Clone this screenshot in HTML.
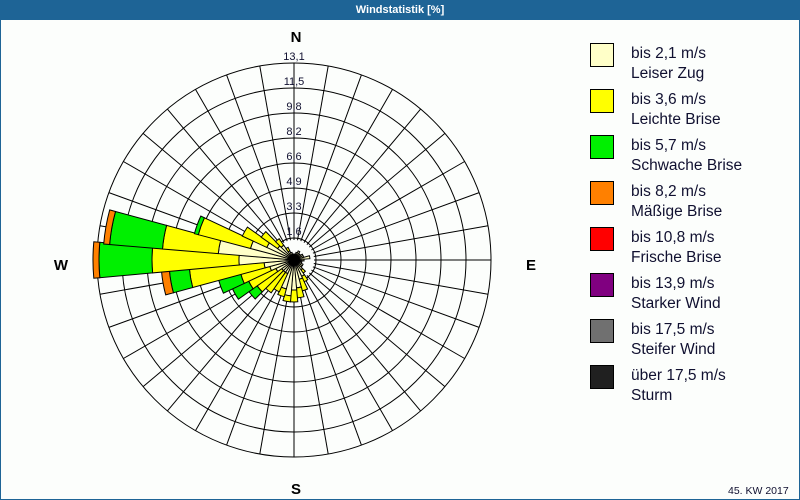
<!DOCTYPE html>
<html><head><meta charset="utf-8"><style>
body{margin:0;width:800px;height:500px;overflow:hidden;background:#fff;font-family:"Liberation Sans",sans-serif}
#f{position:absolute;left:0;top:0;width:798px;height:498px;border:1px solid #1e6496;background:#fcfefc}
#t{position:absolute;left:0;top:0;width:800px;height:20px;background:#1e6496;color:#fff;font-size:11px;font-weight:bold;text-align:center;line-height:21px}
.lg{position:absolute;left:590px;width:22px;height:22px;border:1px solid #000}
.lt{position:absolute;left:631px;font-size:15.5px;line-height:20px;color:#101030}
</style></head><body>
<div id="f"></div>
<div id="t">Windstatistik [%]</div>
<svg id="s" width="800" height="500" style="position:absolute;left:0;top:0"></svg>
<div class="lg" style="top:43px;background:#ffffc8"></div><div class="lt" style="top:44px">bis 2,1 m/s<br>Leiser Zug</div>
<div class="lg" style="top:89px;background:#ffff00"></div><div class="lt" style="top:90px">bis 3,6 m/s<br>Leichte Brise</div>
<div class="lg" style="top:135px;background:#00f000"></div><div class="lt" style="top:136px">bis 5,7 m/s<br>Schwache Brise</div>
<div class="lg" style="top:181px;background:#ff8000"></div><div class="lt" style="top:182px">bis 8,2 m/s<br>Mäßige Brise</div>
<div class="lg" style="top:227px;background:#ff0000"></div><div class="lt" style="top:228px">bis 10,8 m/s<br>Frische Brise</div>
<div class="lg" style="top:273px;background:#800080"></div><div class="lt" style="top:274px">bis 13,9 m/s<br>Starker Wind</div>
<div class="lg" style="top:319px;background:#707070"></div><div class="lt" style="top:320px">bis 17,5 m/s<br>Steifer Wind</div>
<div class="lg" style="top:365px;background:#202020"></div><div class="lt" style="top:366px">über 17,5 m/s<br>Sturm</div>
<div style="position:absolute;left:728px;top:485px;font-size:10.5px;color:#101030">45. KW 2017</div>
<script>
var cx=294,cy=260,s='';
function P(r,a){a=a*Math.PI/180;return [(cx+r*Math.sin(a)).toFixed(1),(cy-r*Math.cos(a)).toFixed(1)];}
var rings=[22,47,72,97,122,147,172,197];
rings.forEach(function(r){s+='<circle cx="'+cx+'" cy="'+cy+'" r="'+r+'" fill="none" stroke="#000" stroke-width="1"/>';});
for(var a=0;a<360;a+=10){var p=P(20,a),q=P(197,a);s+='<line x1="'+p[0]+'" y1="'+p[1]+'" x2="'+q[0]+'" y2="'+q[1]+'" stroke="#000"/>';}
s+='<circle cx="'+cx+'" cy="'+cy+'" r="20" fill="#fcfefc"/>';
var cols=['#ffffc8','#ffff00','#00f000','#ff8000'];
var d={270:[55,142,195,201],280:[76,132,185,191],260:[30,105,125,133],290:[45,99,103],300:[30,57],310:[20,40],250:[25,55,78],240:[20,50,68],230:[15,45,55],220:[15,40],210:[15,35],200:[30,38],190:[36,42],180:[30,42],170:[28,38],160:[20,32],150:[18,24],140:[12,16],80:[16],90:[10],100:[8],320:[18,26],330:[10,14],340:[8],350:[6],0:[6],10:[6],20:[8],30:[10],40:[8],50:[8],60:[10],70:[10],110:[8],120:[10],130:[10]};
for(var k in d){var a=+k,arr=d[k],prev=0;for(var i=0;i<arr.length;i++){var r0=prev,r1=arr[i],w=5.2;
var p1=P(r0,a-w),p2=P(r1,a-w),p3=P(r1,a+w),p4=P(r0,a+w);
s+='<path d="M'+p1+' L'+p2+' A'+r1+' '+r1+' 0 0 1 '+p3+' L'+p4+(r0>0?' A'+r0+' '+r0+' 0 0 0 '+p1:'')+'Z" fill="'+cols[i]+'" stroke="#000" stroke-width="1"/>';prev=r1;}}
var labs=['1,6','3,3','4,9','6,6','8,2','9,8','11,5','13,1'];
labs.forEach(function(l,i){var y=cy-rings[i]-3;s+='<text x="'+cx+'" y="'+y+'" font-size="11" text-anchor="middle" fill="#101030" font-family="Liberation Sans">'+l+'</text>';});
s+='<text x="296" y="42" font-size="15" font-weight="bold" text-anchor="middle" font-family="Liberation Sans">N</text>';
s+='<text x="296" y="494" font-size="15" font-weight="bold" text-anchor="middle" font-family="Liberation Sans">S</text>';
s+='<text x="61" y="270" font-size="15" font-weight="bold" text-anchor="middle" font-family="Liberation Sans">W</text>';
s+='<text x="531" y="270" font-size="15" font-weight="bold" text-anchor="middle" font-family="Liberation Sans">E</text>';
document.getElementById('s').innerHTML=s;
</script>
</body></html>
